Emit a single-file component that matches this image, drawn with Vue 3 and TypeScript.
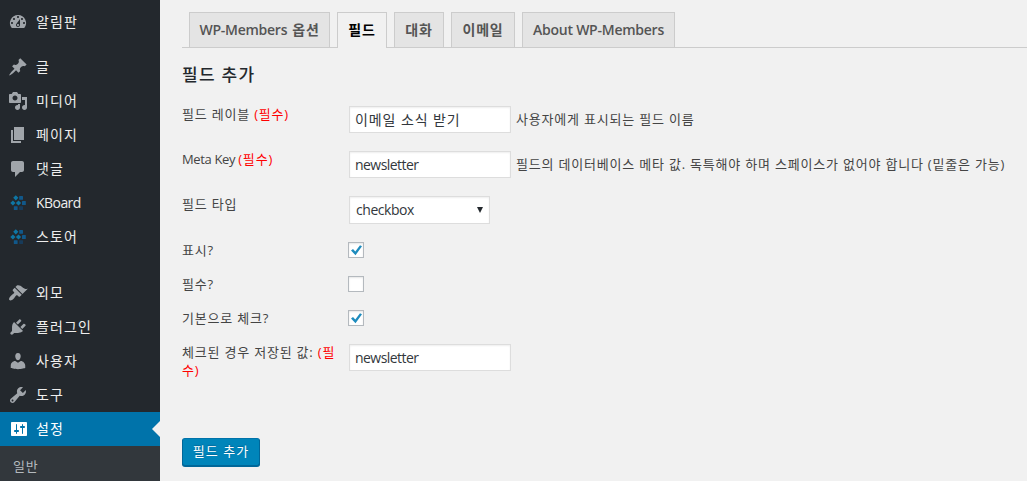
<script setup lang="ts">
import { ref } from 'vue'

interface MenuItem {
  label: string
  icon: string
  latin?: boolean
  gap?: 'small' | 'large'
  current?: boolean
}

interface Tab {
  label: string
  suffix?: string
  latin?: boolean
  size: string
  active?: boolean
}

const icons: Record<string, string> = {
  dashboard:
    'M3.76 16h12.48A7.998 7.998 0 0 0 10 3a7.998 7.998 0 0 0-6.24 13zM10 4c.55 0 1 .45 1 1s-.45 1-1 1-1-.45-1-1 .45-1 1-1zM6 6c.55 0 1 .45 1 1s-.45 1-1 1-1-.45-1-1 .45-1 1-1zm8 0c.55 0 1 .45 1 1s-.45 1-1 1-1-.45-1-1 .45-1 1-1zm-5.37 5.55L12 7v6c0 1.1-.9 2-2 2s-2-.9-2-2c0-.57.24-1.08.63-1.45zM4 10c.55 0 1 .45 1 1s-.45 1-1 1-1-.45-1-1 .45-1 1-1zm12 0c.55 0 1 .45 1 1s-.45 1-1 1-1-.45-1-1 .45-1 1-1zm-5 3c0-.55-.45-1-1-1s-1 .45-1 1 .45 1 1 1 1-.45 1-1z',
  post: 'M10.44 3.02l1.82-1.82 6.36 6.35-1.83 1.82c-1.05-.68-2.48-.57-3.41.36l-.75.75c-.92.93-1.04 2.35-.35 3.41l-1.83 1.82-2.41-2.41-2.8 2.79c-.42.42-3.38 2.71-3.8 2.29s1.86-3.39 2.28-3.81l2.79-2.79L4.1 9.36l1.83-1.82c1.05.69 2.48.57 3.4-.36l.75-.75c.93-.92 1.05-2.35.36-3.41z',
  media:
    'M13 11V4c0-.55-.45-1-1-1h-1.67L9 1H5L3.67 3H2c-.55 0-1 .45-1 1v7c0 .55.45 1 1 1h10c.55 0 1-.45 1-1zM7 4.5c1.38 0 2.5 1.12 2.5 2.5S8.38 9.5 7 9.5 4.5 8.38 4.5 7 5.62 4.5 7 4.5zM14 6h5v10.5c0 1.38-1.12 2.5-2.5 2.5S14 17.88 14 16.5s1.12-2.5 2.5-2.5c.17 0 .34.02.5.05V9h-3V6zm-4 8.05V13h2v3.5c0 1.38-1.12 2.5-2.5 2.5S7 17.88 7 16.5 8.12 14 9.5 14c.17 0 .34.02.5.05z',
  page: 'M6 15V2h10v13H6zm-1 1h8v2H3V5h2v11z',
  comments: 'M5 2h9c1.1 0 2 .9 2 2v7c0 1.1-.9 2-2 2h-2l-5 5v-5H5c-1.1 0-2-.9-2-2V4c0-1.1.9-2 2-2z',
  appearance:
    'M14.48 11.06L7.41 3.99l1.5-1.5c.5-.56 2.3-.47 3.51.32 1.21.8 1.43 1.28 2.91 2.1 1.18.64 2.45 1.26 4.45.85zm-.71.71L6.7 4.7 4.93 6.47c-.39.39-.39 1.02 0 1.41l1.06 1.06c.39.39.39 1.03 0 1.42-.6.6-1.43 1.11-2.21 1.69-.35.26-.7.53-1.01.84C1.43 14.23.4 16.08 1.4 17.07c.99 1 2.84-.03 4.18-1.36.31-.31.58-.66.85-1.02.57-.78 1.08-1.61 1.69-2.21.39-.39 1.02-.39 1.41 0l1.06 1.06c.39.39 1.02.39 1.41 0z',
  plugins:
    'M13.11 4.36L9.87 7.6 8 5.73l3.24-3.24c.35-.34 1.05-.2 1.56.32.52.51.66 1.21.31 1.55zm-8 1.77l.91-1.12 9.01 9.01-1.19.84c-.71.71-2.63 1.16-3.82 1.16H6.14L4.9 17.26c-.59.59-1.54.59-2.12 0-.59-.58-.59-1.53 0-2.12l1.24-1.24v-3.88c0-1.13.4-3.19 1.09-3.89zm7.26 3.97l3.24-3.24c.34-.35 1.04-.21 1.55.31.52.51.66 1.21.31 1.55l-3.24 3.25z',
  users:
    'M10 9.25c-2.27 0-2.73-3.44-2.73-3.44C7 4.02 7.82 2 9.97 2c2.16 0 2.98 2.02 2.71 3.81 0 0-.41 3.44-2.68 3.44zm0 2.57L12.72 10c2.39 0 4.52 2.33 4.52 4.53v2.49s-3.65 1.13-7.24 1.13c-3.65 0-7.24-1.13-7.24-1.13v-2.49c0-2.25 1.94-4.48 4.47-4.48z',
  tools:
    'M16.68 9.77c-1.34 1.34-3.3 1.67-4.95.99l-5.41 6.52c-.99.99-2.59.99-3.58 0s-.99-2.59 0-3.57l6.52-5.42c-.68-1.65-.35-3.61.99-4.95 1.28-1.28 3.12-1.62 4.72-1.06l-2.89 2.89 2.82 2.82 2.86-2.87c.53 1.58.18 3.39-1.08 4.65zM3.81 16.21c.4.39 1.04.39 1.43 0 .4-.4.4-1.04 0-1.43-.39-.4-1.03-.4-1.43 0-.39.39-.39 1.03 0 1.43z',
  settings:
    'M18 16V4c0-.55-.45-1-1-1H3c-.55 0-1 .45-1 1v12c0 .55.45 1 1 1h14c.55 0 1-.45 1-1zM8 11h1c.55 0 1 .45 1 1s-.45 1-1 1H8v1.5c0 .28-.22.5-.5.5s-.5-.22-.5-.5V13H6c-.55 0-1-.45-1-1s.45-1 1-1h1V5.5c0-.28.22-.5.5-.5s.5.22.5.5V11zm5-2h-1c-.55 0-1-.45-1-1s.45-1 1-1h1V5.5c0-.28.22-.5.5-.5s.5.22.5.5V7h1c.55 0 1 .45 1 1s-.45 1-1 1h-1v5.5c0 .28-.22.5-.5.5s-.5-.22-.5-.5V9z',
}

const checkMark = 'M2 7.6l2-1.6 2.3 2.4 4.7-6.2 2 1.1-6.5 8.9z'

const menu: MenuItem[] = [
  { label: '알림판', icon: 'dashboard' },
  { label: '글', icon: 'post', gap: 'small' },
  { label: '미디어', icon: 'media' },
  { label: '페이지', icon: 'page' },
  { label: '댓글', icon: 'comments' },
  { label: 'KBoard', icon: 'kboard', latin: true },
  { label: '스토어', icon: 'kboard' },
  { label: '외모', icon: 'appearance', gap: 'large' },
  { label: '플러그인', icon: 'plugins' },
  { label: '사용자', icon: 'users' },
  { label: '도구', icon: 'tools' },
  { label: '설정', icon: 'settings', current: true },
]

const tabs: Tab[] = [
  { label: 'WP-Members', suffix: '옵션', latin: true, size: 'options' },
  { label: '필드', size: 'short', active: true },
  { label: '대화', size: 'short' },
  { label: '이메일', size: 'medium' },
  { label: 'About WP-Members', latin: true, size: 'about' },
]

const fieldLabel = ref('이메일 소식 받기')
const metaKey = ref('newsletter')
const savedValue = ref('newsletter')
const shown = ref(true)
const required = ref(false)
const checkedByDefault = ref(true)
</script>

<template>
  <div class="admin">
    <nav class="sidebar">
      <a
        v-for="item in menu"
        :key="item.label"
        class="menu-item"
        :class="[{ current: item.current, latin: item.latin }, item.gap && `gap-${item.gap}`]"
      >
        <svg v-if="item.icon === 'kboard'" class="icon" viewBox="0 0 20 20">
          <g fill="#0e76a4">
            <path d="M7.8 2.2l2.6 2.6-2.6 2.6-2.6-2.6zM4.9 7.4L7.5 10l-2.6 2.6L2.3 10zM10.5 7.4l2.6 2.6-2.6 2.6L7.9 10z" />
          </g>
          <g fill="#11588a">
            <rect x="11.2" y="3" width="3.8" height="3.8" rx=".5" />
            <rect x="14" y="8.1" width="3.8" height="3.8" rx=".5" />
            <rect x="5.8" y="13.2" width="3.8" height="3.8" rx=".5" />
          </g>
          <rect x="11.2" y="13.2" width="3.8" height="3.8" rx=".5" fill="#173b5a" />
        </svg>
        <svg v-else class="icon" viewBox="0 0 20 20"><path :d="icons[item.icon]" fill="currentColor" /></svg>
        <span class="menu-label">{{ item.label }}</span>
      </a>
      <div class="submenu"><a>일반</a></div>
    </nav>

    <main class="content">
      <div class="tabs">
        <a v-for="tab in tabs" :key="tab.label" class="tab" :class="[tab.size, { active: tab.active }]">
          <span :class="{ latin: tab.latin }">{{ tab.label }}</span>
          <span v-if="tab.suffix" class="suffix">{{ tab.suffix }}</span>
        </a>
      </div>

      <h3>필드 추가</h3>

      <form class="fields" @submit.prevent>
        <label>필드 레이블 <b>(필수)</b></label>
        <div class="control">
          <input v-model="fieldLabel" class="text korean" type="text" />
          <span class="hint">사용자에게 표시되는 필드 이름</span>
        </div>

        <label><span class="latin">Meta Key </span><b>(필수)</b></label>
        <div class="control">
          <input v-model="metaKey" class="text" type="text" />
          <span class="hint">필드의 데이터베이스 메타 값. 독특해야 하며 스페이스가 없어야 합니다 (밑줄은 가능)</span>
        </div>

        <label>필드 타입</label>
        <div class="control">
          <div class="select">
            <span>checkbox</span>
            <svg viewBox="0 0 6 6"><path d="M0 0h6L3 6z" fill="#23282d" /></svg>
          </div>
        </div>

        <label>표시?</label>
        <div class="control">
          <span class="check" role="checkbox" @click="shown = !shown">
            <svg v-if="shown" viewBox="0 0 14 14"><path :d="checkMark" fill="#1e8cbe" /></svg>
          </span>
        </div>

        <label>필수?</label>
        <div class="control">
          <span class="check" role="checkbox" @click="required = !required">
            <svg v-if="required" viewBox="0 0 14 14"><path :d="checkMark" fill="#1e8cbe" /></svg>
          </span>
        </div>

        <label>기본으로 체크?</label>
        <div class="control">
          <span class="check" role="checkbox" @click="checkedByDefault = !checkedByDefault">
            <svg v-if="checkedByDefault" viewBox="0 0 14 14"><path :d="checkMark" fill="#1e8cbe" /></svg>
          </span>
        </div>

        <label>체크된 경우 저장된 값: <b>(필<br />수)</b></label>
        <div class="control">
          <input v-model="savedValue" class="text" type="text" />
        </div>
      </form>

      <button class="submit" type="button">필드 추가</button>
    </main>
  </div>
</template>

<style>
html,
body {
  background: #f1f1f1;
  overflow: hidden;
}
</style>

<style scoped>
.admin {
  display: flex;
  width: 1027px;
  height: 481px;
  overflow: hidden;
  color: #444;
  font: 13px/18px 'Open Sans', 'Noto Sans CJK KR', sans-serif;
  letter-spacing: 0.8px;
  white-space: nowrap;
}

.admin * {
  box-sizing: border-box;
}

.sidebar {
  display: flex;
  flex: none;
  flex-direction: column;
  width: 160px;
  padding-top: 5px;
  background: #23282d;
}

.menu-item {
  display: flex;
  position: relative;
  flex: none;
  align-items: center;
  gap: 8px;
  height: 34px;
  padding: 0 0 1px 8px;
  color: #eee;
  font-size: 14px;
  letter-spacing: 1.15px;
}

.menu-item.latin {
  padding-bottom: 0;
  letter-spacing: -0.55px;
}

.gap-small {
  margin-top: 11px;
}

.gap-large {
  margin-top: 22px;
}

.icon {
  flex: none;
  width: 20px;
  height: 20px;
  color: #a0a5aa;
}

.menu-item:not(.latin) .icon {
  margin-top: 1px;
}

.current {
  gap: 7px;
  padding-left: 9px;
  background: #0073aa;
  color: #fff;
}

.current .icon {
  color: #fff;
}

.current::after {
  position: absolute;
  top: 9px;
  right: 0;
  border: 8px solid transparent;
  border-left-width: 0;
  border-right-color: #f1f1f1;
  content: '';
}

.submenu {
  flex: 1;
  padding: 11px 13px;
  background: #32373c;
  color: #b4b9be;
}

.content {
  display: flex;
  flex: 1;
  flex-direction: column;
  align-items: flex-start;
  padding: 12px 0 0 22px;
}

.tabs {
  display: flex;
  gap: 7px;
  width: 100%;
  height: 36px;
  padding-left: 7px;
  border-bottom: 1px solid #ccc;
}

.tab {
  display: flex;
  align-items: center;
  justify-content: center;
  height: 35px;
  border: 1px solid #ccc;
  border-bottom: 0;
  background: #e4e4e4;
  color: #555;
  font-size: 14px;
  font-weight: 600;
}

.tab .latin {
  letter-spacing: -0.25px;
}

.suffix {
  margin-left: 5px;
}

.tab.options {
  width: 141px;
}

.tab.short {
  width: 50px;
}

.tab.medium {
  width: 64px;
}

.tab.about {
  width: 153px;
}

.tab.active {
  height: 36px;
  padding-bottom: 1px;
  background: #f1f1f1;
  color: #000;
}

h3 {
  margin: 15px 0 0;
  color: #23282d;
  font-size: 17px;
  font-weight: 500;
  line-height: 24px;
  letter-spacing: 1.3px;
}

.fields {
  display: grid;
  grid-template-rows: 45px 45px 46px 34px 34px 34px 46px;
  grid-template-columns: 166px auto;
  margin-top: 18px;
}

label b {
  color: #f00;
  font-weight: 400;
}

label .latin {
  letter-spacing: -0.35px;
  white-space: pre;
}

.control {
  display: flex;
  align-items: flex-start;
  padding-top: 1px;
}

.text {
  width: 162px;
  height: 27px;
  margin: 0 5px 0 1px;
  padding: 0 5px;
  border: 1px solid #ddd;
  outline: 0;
  background: #fff;
  box-shadow: inset 0 1px 2px rgba(0, 0, 0, 0.07);
  color: #32373c;
  font: 14px 'Open Sans', 'Noto Sans CJK KR', sans-serif;
  letter-spacing: -0.55px;
}

.text.korean {
  padding-bottom: 2px;
  letter-spacing: 0.9px;
}

.hint {
  line-height: 26px;
}

.select {
  display: flex;
  align-items: center;
  justify-content: space-between;
  width: 141px;
  height: 28px;
  margin-left: 1px;
  padding: 0 6px;
  border: 1px solid #ddd;
  background: #fff;
  box-shadow: inset 0 1px 2px rgba(0, 0, 0, 0.07);
  color: #32373c;
  font-size: 14px;
  letter-spacing: -0.45px;
}

.select svg {
  width: 6px;
  height: 6px;
}

.check {
  width: 16px;
  height: 16px;
  border: 1px solid #b4b9be;
  background: #fff;
  box-shadow: inset 0 1px 2px rgba(0, 0, 0, 0.1);
}

.check svg {
  display: block;
  width: 14px;
  height: 14px;
}

.submit {
  width: 78px;
  height: 28px;
  margin-top: 49px;
  padding: 0 0 3px;
  border: 1px solid;
  border-color: #0073aa #006799 #006799;
  border-radius: 3px;
  background: #0085ba;
  box-shadow: 0 1px 0 #006799;
  color: #fff;
  font: 13px 'Open Sans', 'Noto Sans CJK KR', sans-serif;
  letter-spacing: 1.1px;
  text-shadow: 0 -1px 1px #006799;
}
</style>
